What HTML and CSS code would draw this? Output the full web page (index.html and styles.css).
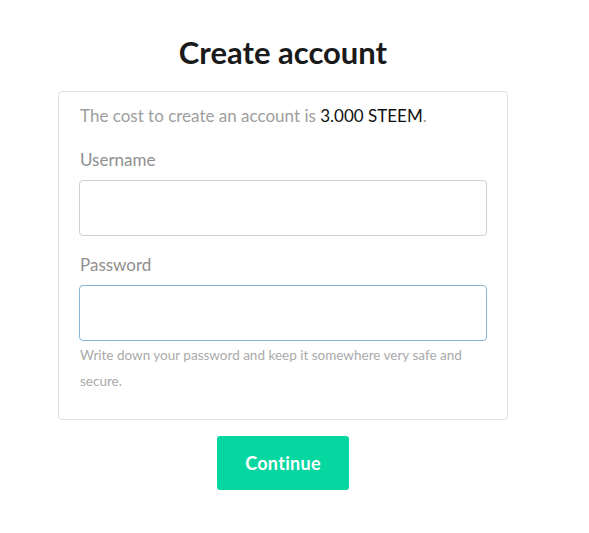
FILE: index.html
```html
<!DOCTYPE html>
<html>
<head>
<meta charset="utf-8">
<link rel="stylesheet" href="styles.css">
</head>
<body>
<div class="wrap">
  <h1 class="title">Create account</h1>
  <div class="card">
    <p class="cost">The cost to create an account is <span class="amount">3.000 STEEM</span>.</p>
    <label class="label">Username</label>
    <input class="field" type="text">
    <label class="label label-pw">Password</label>
    <input class="field field-focus" type="password">
    <p class="help">Write down your password and keep it somewhere very safe and secure.</p>
  </div>
  <div class="actions">
    <button class="btn">Continue</button>
  </div>
</div>
</body>
</html>
```
FILE: styles.css
```css
html, body {
  margin: 0;
  padding: 0;
  background: #fff;
  font-family: Lato, "Open Sans", sans-serif;
}
.wrap {
  width: 450px;
  margin-left: 58px;
  padding-top: 34px;
}
.title {
  margin: 0;
  text-align: center;
  font-size: 31px;
  font-weight: 700;
  color: #1a1a1a;
  line-height: 36px;
}
.card {
  margin-top: 21px;
  border: 1px solid #e0e0e0;
  border-radius: 4px;
  padding: 12px 20px 25px 20px;
  display: flex;
  flex-direction: column;
}
.cost {
  margin: 0;
  font-size: 17px;
  line-height: 24px;
  color: #9e9e9e;
  padding-left: 1px;
}
.amount {
  color: #111;
}
.label {
  margin-top: 20px;
  font-size: 17px;
  line-height: 24px;
  color: #8f8f8f;
  padding-left: 1px;
}
.label-pw {
  margin-top: 17px;
}
.field {
  margin-top: 8px;
  height: 56px;
  box-sizing: border-box;
  border: 1px solid #cfcfcf;
  border-radius: 4px;
  outline: none;
  padding: 0 12px;
  font-family: inherit;
  font-size: 16px;
}
.field-focus {
  border-color: #8ab6d6;
}
.help {
  margin: 1px 0 0 0;
  font-size: 13.5px;
  line-height: 26px;
  color: #aaaaaa;
  padding-left: 1px;
  padding-right: 20px;
}
.actions {
  display: flex;
  justify-content: center;
  margin-top: 16px;
}
.btn {
  width: 132px;
  height: 54px;
  border: none;
  border-radius: 3px;
  background: #06d6a0;
  color: #fff;
  font-family: inherit;
  font-weight: 700;
  font-size: 18px;
  letter-spacing: 0.3px;
}
```
